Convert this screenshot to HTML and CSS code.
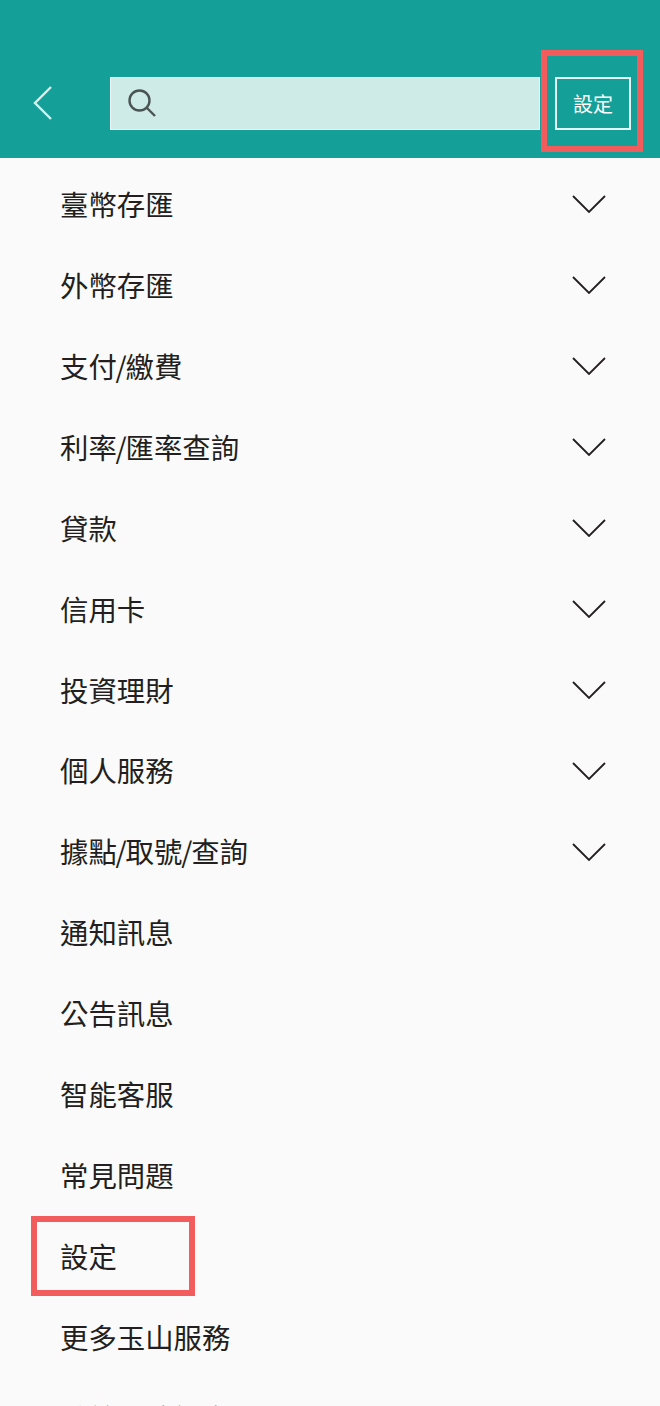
FILE: index.html
```html
<!DOCTYPE html>
<html lang="zh-Hant">
<head>
    <meta charset="UTF-8">
    <meta name="viewport" content="width=device-width, initial-scale=1.0">
    <title>選單</title>
    <link rel="stylesheet" href="styles.css">
</head>
<body>
    <header class="topbar">
        <button class="back" type="button" aria-label="返回">
            <svg width="22" height="36" viewBox="0 0 22 36"><path d="M19 1 L3 17 L19 33"/></svg>
        </button>
        <div class="search">
            <svg width="32" height="32" viewBox="0 0 32 32"><circle cx="12.5" cy="12.5" r="10"/><path d="M20 20 L28 28"/></svg>
        </div>
        <button class="settings" type="button">設定</button>
        <span class="mark mark-top"></span>
    </header>

    <ul class="menu">
        <li class="item">臺幣存匯<svg class="chevron" width="34" height="18" viewBox="0 0 34 18"><path d="M1 1 L17 17 L33 1"/></svg></li>
        <li class="item">外幣存匯<svg class="chevron" width="34" height="18" viewBox="0 0 34 18"><path d="M1 1 L17 17 L33 1"/></svg></li>
        <li class="item"><span>支付<span class="slash">/</span>繳費</span><svg class="chevron" width="34" height="18" viewBox="0 0 34 18"><path d="M1 1 L17 17 L33 1"/></svg></li>
        <li class="item"><span>利率<span class="slash">/</span>匯率查詢</span><svg class="chevron" width="34" height="18" viewBox="0 0 34 18"><path d="M1 1 L17 17 L33 1"/></svg></li>
        <li class="item">貸款<svg class="chevron" width="34" height="18" viewBox="0 0 34 18"><path d="M1 1 L17 17 L33 1"/></svg></li>
        <li class="item">信用卡<svg class="chevron" width="34" height="18" viewBox="0 0 34 18"><path d="M1 1 L17 17 L33 1"/></svg></li>
        <li class="item">投資理財<svg class="chevron" width="34" height="18" viewBox="0 0 34 18"><path d="M1 1 L17 17 L33 1"/></svg></li>
        <li class="item">個人服務<svg class="chevron" width="34" height="18" viewBox="0 0 34 18"><path d="M1 1 L17 17 L33 1"/></svg></li>
        <li class="item"><span>據點<span class="slash">/</span>取號<span class="slash">/</span>查詢</span><svg class="chevron" width="34" height="18" viewBox="0 0 34 18"><path d="M1 1 L17 17 L33 1"/></svg></li>
        <li class="item">通知訊息</li>
        <li class="item">公告訊息</li>
        <li class="item">智能客服</li>
        <li class="item">常見問題</li>
        <li class="item">設定<span class="mark mark-item"></span></li>
        <li class="item">更多玉山服務</li>
        <li class="item">系統環境設定</li>
    </ul>
</body>
</html>
```

FILE: styles.css
```css
* {
    margin: 0;
    padding: 0;
    box-sizing: border-box;
}

html, body {
    height: 100%;
    overflow: hidden;
}

body {
    background: #fafafa;
    color: #231f20;
    font-family: "Noto Sans CJK TC", "Noto Sans", sans-serif;
}

.topbar {
    position: relative;
    display: flex;
    align-items: center;
    height: 158px;
    padding: 77px 29px 28px 32px;
    background: #14a098;
}

.back {
    display: flex;
    width: 78px;
    background: none;
    border: none;
}

.back path {
    fill: none;
    stroke: #d4f0ec;
    stroke-width: 2.4;
}

.search {
    display: flex;
    align-items: center;
    width: 430px;
    height: 53px;
    padding-left: 16px;
    background: #cfebe8;
    border: 1px solid #eef9f7;
}

.search circle,
.search path {
    fill: none;
    stroke: #4a5553;
    stroke-width: 2.4;
}

.settings {
    width: 76px;
    height: 53px;
    margin-left: 15px;
    color: #fff;
    font-family: inherit;
    font-size: 20px;
    background: none;
    border: 2px solid #e4f6f3;
}

.mark {
    position: absolute;
    border: 6px solid #f35c5c;
}

.mark-top {
    top: 50px;
    left: 541px;
    width: 102px;
    height: 102px;
}

.menu {
    padding-top: 7px;
    list-style: none;
}

.item {
    position: relative;
    display: flex;
    align-items: center;
    justify-content: space-between;
    height: 80.9px;
    padding: 0 54px 2px 60px;
    font-size: 28.4px;
    line-height: 1;
}

.slash {
    margin: 0 -1.2px;
}

.chevron path {
    fill: none;
    stroke: #231f20;
    stroke-width: 1.8;
}

.mark-item {
    top: -1px;
    left: 31px;
    width: 164px;
    height: 80px;
}
```
